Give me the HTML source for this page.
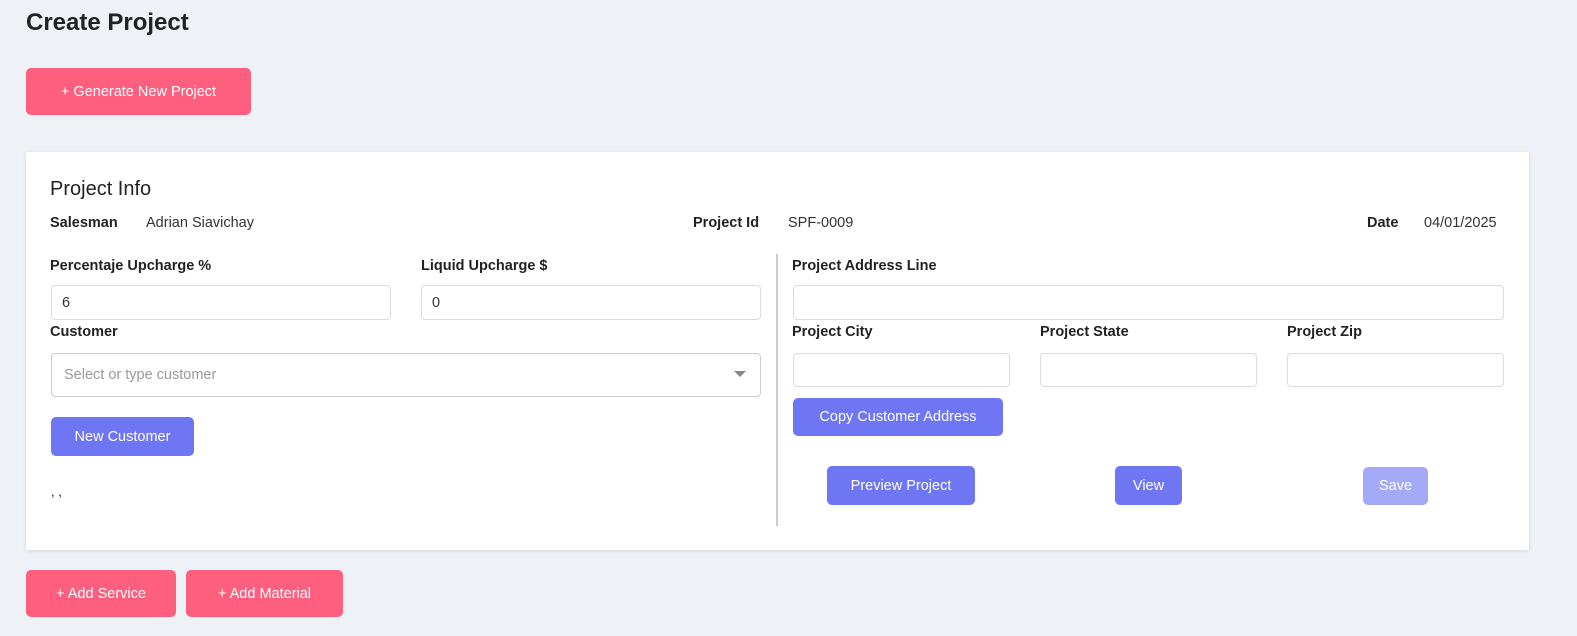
<!DOCTYPE html>
<html><head><meta charset="utf-8"><style>
*{box-sizing:border-box;margin:0;padding:0}
body{width:1577px;height:636px;background:#eef1f6;font-family:"Liberation Sans",sans-serif;color:#222;position:relative;overflow:hidden}
.a{position:absolute}
.btn{position:absolute;color:#fff;font-size:14.5px;display:flex;align-items:center;justify-content:center;border-radius:5px}
.pink{background:#fe5f7e}
.blue{background:#6e76f4}
.lbl{position:absolute;font-size:14.5px;font-weight:bold;color:#222}
.inp{position:absolute;background:#fff;border:1px solid #d8dbe0;border-radius:4px;font-size:14.5px;padding-left:10px;display:flex;align-items:center;color:#333}
</style></head><body>
<div class="a" style="left:26px;top:9px;font-size:24px;font-weight:bold;color:#222">Create Project</div>
<div class="btn pink" style="left:26px;top:68px;width:225px;height:47px">+ Generate New Project</div>
<div class="a" style="left:26px;top:152px;width:1503px;height:398px;background:#fff;box-shadow:0 1px 4px rgba(0,0,0,.12)"></div>
<div class="a" style="left:50px;top:178px;font-size:20px;color:#222">Project Info</div>
<div class="lbl" style="left:50px;top:215px">Salesman</div>
<div class="a" style="left:146px;top:215px;font-size:14.5px;color:#333">Adrian Siavichay</div>
<div class="lbl" style="left:693px;top:215px">Project Id</div>
<div class="a" style="left:788px;top:215px;font-size:14.5px;color:#333">SPF-0009</div>
<div class="lbl" style="left:1367px;top:215px">Date</div>
<div class="a" style="left:1424px;top:215px;font-size:14.5px;color:#333">04/01/2025</div>
<div class="lbl" style="left:50px;top:258px">Percentaje Upcharge %</div>
<div class="lbl" style="left:421px;top:258px">Liquid Upcharge $</div>
<div class="inp" style="left:51px;top:285px;width:340px;height:35px">6</div>
<div class="inp" style="left:421px;top:285px;width:340px;height:35px">0</div>
<div class="lbl" style="left:50px;top:324px">Customer</div>
<div class="inp" style="left:51px;top:353px;width:710px;height:44px;color:#999;padding-left:12px;border-color:#ccc">Select or type customer</div>
<div class="a" style="left:734px;top:371px;width:0;height:0;border-left:6px solid transparent;border-right:6px solid transparent;border-top:6px solid #888"></div>
<div class="btn blue" style="left:51px;top:417px;width:143px;height:39px">New Customer</div>
<div class="a" style="left:51px;top:484px;font-size:13px">, ,</div>
<div class="a" style="left:776px;top:254px;width:2px;height:272px;background:#ccc"></div>
<div class="lbl" style="left:792px;top:258px">Project Address Line</div>
<div class="inp" style="left:793px;top:285px;width:711px;height:35px"></div>
<div class="lbl" style="left:792px;top:324px">Project City</div>
<div class="lbl" style="left:1040px;top:324px">Project State</div>
<div class="lbl" style="left:1287px;top:324px">Project Zip</div>
<div class="inp" style="left:793px;top:353px;width:217px;height:34px"></div>
<div class="inp" style="left:1040px;top:353px;width:217px;height:34px"></div>
<div class="inp" style="left:1287px;top:353px;width:217px;height:34px"></div>
<div class="btn blue" style="left:793px;top:398px;width:210px;height:38px">Copy Customer Address</div>
<div class="btn blue" style="left:827px;top:466px;width:148px;height:39px">Preview Project</div>
<div class="btn blue" style="left:1115px;top:466px;width:67px;height:39px">View</div>
<div class="btn" style="left:1363px;top:467px;width:65px;height:38px;background:#a5aaf8">Save</div>
<div class="btn pink" style="left:26px;top:570px;width:150px;height:47px">+ Add Service</div>
<div class="btn pink" style="left:186px;top:570px;width:157px;height:47px">+ Add Material</div>
</body></html>
